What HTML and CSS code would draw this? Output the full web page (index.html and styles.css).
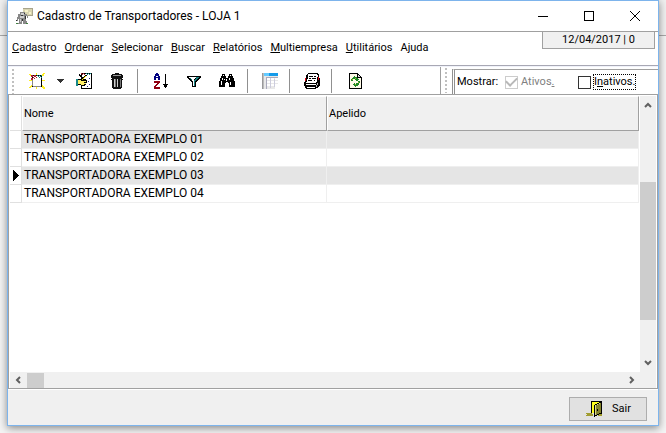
FILE: index.html
```html
<!DOCTYPE html>
<html lang="pt-BR">
<head>
<meta charset="utf-8">
<title>Cadastro de Transportadores - LOJA 1</title>
<link rel="stylesheet" href="styles.css">
</head>
<body>
<main class="window">
  <header class="titlebar">
    <svg class="app-icon" viewBox="0 0 18 18" shape-rendering="crispEdges">
      <path fill="#d8d4b0" d="M8 1h9v7H9z"/><path fill="#a8a48c" d="M8 1h10v1H8zM17 1h1v8h-1zM12 8h6v1h-6z"/><path fill="#f6f2c8" d="M10 3h3v2h-3zM14 5h2v2h-2z"/>
      <path fill="#888" d="M5 5h5v2h2v2h1v2h-1V9h-1v5h1v3H8v-4H7v4H3v-1h1v-4H3v2H1v-1h1v-3h1V7h2z"/><path fill="#ccc" d="M6 6h3v2H6zM5 9h4v2H5zM5 12h1v3H5z"/><path fill="#333" d="M9 6h1v1H9zM1 13h1v1H1zM7 12h1v2H7zM10 9h1v3h-1zM6 8h2v1H6z"/><path fill="#408040" d="M1 16h2v1H1zM11 16h2v1h-2z"/>
    </svg>
    <h1>Cadastro de Transportadores - LOJA 1</h1>
    <div class="caption-buttons">
      <button type="button" aria-label="Minimizar"><svg viewBox="0 0 10 10" shape-rendering="crispEdges"><path fill="#000" d="M0 5h10v1H0z"/></svg></button>
      <button type="button" aria-label="Maximizar"><svg viewBox="0 0 10 10" shape-rendering="crispEdges"><path fill="#000" fill-rule="evenodd" d="M0 0h10v10H0zM1 1v8h8V1z"/></svg></button>
      <button type="button" aria-label="Fechar"><svg viewBox="0 0 10 10"><path stroke="#000" d="M0 0l10 10M10 0L0 10"/></svg></button>
    </div>
  </header>

  <div class="menu-row">
    <nav class="menu">
      <a href="#"><u>C</u>adastro</a>
      <a href="#"><u>O</u>rdenar</a>
      <a href="#"><u>S</u>elecionar</a>
      <a href="#"><u>B</u>uscar</a>
      <a href="#"><u>R</u>elatórios</a>
      <a href="#"><u>M</u>ultiempresa</a>
      <a href="#"><u>U</u>tilitários</a>
      <a href="#">Ajuda</a>
    </nav>
    <div class="status-date">12/04/2017 | 0</div>
  </div>

  <div class="toolbar">
    <div class="tools">
      <span class="grip"></span>
      <button type="button" aria-label="Novo"><svg viewBox="0 0 16 16" shape-rendering="crispEdges">
        <path fill="#ffee20" d="M0 1h2v1h1v2H2V3H1V2H0zM7 0h1v3H7zM14 0h2v1h-1v2h-2V1h1zM0 7h3v1H0zM13 7h3v1h-3zM0 14h1v-1h1v-1h2v2H2v1H0zM7 13h1v3H7zM12 12h2v1h1v1h1v2h-2v-1h-1v-1h-1z"/>
        <path fill="#000" d="M3 2h10v12H3z"/><path fill="#fff" d="M4 3h8v10H4z"/><path fill="#888" d="M3 7h1v6H3zM4 13h8v1H4z"/>
        <path fill="#b02030" d="M2 2h2v2H2zM5 2h2v2H5zM4 4h1v1H4zM2 5h2v2H2zM5 5h1v1H5zM7 4h1v1H7z"/><path fill="#188888" d="M8 2h1v1H8zM10 2h1v1h-1zM12 2h1v1h-1zM9 3h1v1H9zM11 3h1v1h-1zM10 4h1v1h-1zM12 4h1v1h-1z"/>
      </svg></button>
      <button type="button" class="drop" aria-label="Opções de novo"><svg viewBox="0 0 7 4" shape-rendering="crispEdges"><path fill="#333" d="M0 0h7v1H6v1H5v1H4v1H3V3H2V2H1V1H0z"/></svg></button>
      <button type="button" aria-label="Editar"><svg viewBox="0 0 16 16" shape-rendering="crispEdges">
        <path fill="#000" d="M5 0h11v16H5z"/><path fill="#fff" d="M6 1h9v14H6z"/><path fill="#b02030" d="M5 0h1v1H5zM7 0h1v1H7zM6 1h1v1H6zM8 1h1v1H8z"/><path fill="#188888" d="M10 0h1v1h-1zM12 0h1v1h-1zM14 0h1v1h-1zM11 1h1v1h-1zM13 1h1v1h-1z"/><path fill="#20207a" d="M13 5h1v1h-1zM12 8h1v1h-1zM13 11h1v1h-1zM11 13h1v1h-1z"/>
        <path fill="#000" d="M3 6h3V5h1V4h1V3h1V2h2v1h-1v1H9v1H8v1h2v1h1v3h-1v2H9v1H5v-1H2V6z"/><path fill="#ffef66" d="M2 7h3v1h5v1H8v1h2v1H8v1H5v-1H2z"/><path fill="#ffe000" d="M9 3h1v1H9zM8 4h1v1H8zM7 5h1v1H7zM6 6h1v1H6z"/><path fill="#188888" d="M0 6h2v7H0z"/><path fill="#000" d="M3 1h1v1h1v1h1v1h1v1H5V4H4V3H3z"/>
      </svg></button>
      <button type="button" aria-label="Excluir"><svg viewBox="0 0 16 16" shape-rendering="crispEdges">
        <path fill="#111" d="M6 0h4v1h3v1h1v3h-1v1h1v1h-1v8h-1v1H4v-1H3V7H2V6h1V5H2V2h1V1h3z"/><path fill="#999" d="M4 2h8v1H4z"/><path fill="#ccc" d="M5 6h1v8H5zM8 6h1v8H8z"/><path fill="#777" d="M6 6h1v8H6zM11 6h1v8h-1z"/>
      </svg></button>
      <span class="sep"></span>
      <button type="button" aria-label="Ordenar"><svg viewBox="0 0 16 16" shape-rendering="crispEdges">
        <path fill="#000080" d="M3 0h2v1h1v2h1v4H5V5H3v2H1V3h1V1h1zM3 3v1h2V3z"/><path fill="#900010" d="M1 8h6v2H6v1H5v1H4v1H3v1h4v2H1v-3h1v-1h1v-1h1v-1H1z"/><path fill="#000" d="M12 1h1v10h2v1h-1v2h-1v1h-1v-1h-1v-2h-1v-1h2z"/>
      </svg></button>
      <button type="button" aria-label="Filtrar"><svg viewBox="0 0 16 16" shape-rendering="crispEdges">
        <path fill="#000" d="M1 3h14v2h-1v1h-1v1h-1v1h-1v1h-1v5H6V9H5V8H4V7H3V6H2V5H1z"/><path fill="#fff" d="M3 4h7v1H9v1H8v1h1v6H7V8H6V7H5V6H4V5H3z"/><path fill="#188080" d="M10 4h3v1h-1v1h-1v1h-1v1H9v5H8V7h1V6h1zM4 5h1v1H4zM5 6h1v1H5z"/>
      </svg></button>
      <button type="button" aria-label="Localizar"><svg viewBox="0 0 16 16" shape-rendering="crispEdges">
        <path fill="#000" d="M3 1h3v2h1v2h2V3h1V1h3v2h1v2h1v3h1v6h-6v-4H9V9H7v1H6v4H0V8h1V5h1V3h1z"/><path fill="#fff" d="M4 2h1v1H4zM3 5h1v2H3zM2 8h1v4H2zM11 2h1v1h-1zM10 5h1v2h-1zM11 9h1v3h-1zM7 6h1v2H7zM5 6h1v1H5z"/>
      </svg></button>
      <span class="sep"></span>
      <button type="button" class="solo" aria-label="Grade"><svg viewBox="0 0 16 16" shape-rendering="crispEdges">
        <path fill="#e8e8e8" d="M0 0h16v16H0z"/><path fill="#999" d="M0 0h1v16H0z"/><path fill="#bbb" d="M1 0h1v16H1z"/><path fill="#159bea" d="M2 0h14v3H2z"/><path fill="#63caff" d="M2 0h5v3H2z"/><path fill="#fff" d="M5 5h3v2H5zM9 5h3v2H9zM13 5h3v2h-3zM5 8h3v2H5zM9 8h3v2H9zM13 8h3v2h-3zM5 11h3v2H5zM9 11h3v2H9zM13 11h3v5h-3z"/><path fill="#aab" d="M4 4h12v1H4zM4 5h1v11H4z"/><path fill="#ccd" d="M8 5h1v10H8zM12 6h1v8h-1z"/>
      </svg></button>
      <span class="sep"></span>
      <button type="button" class="solo" aria-label="Agenda"><svg viewBox="0 0 16 16" shape-rendering="crispEdges">
        <path fill="#000" d="M4 0h10v1h1v4h1v8h-1v1h-1v1h-2v1H2v-1H1v-2H0V9h1V5h1V2h1V1h1z"/><path fill="#fff" d="M4 1h9v1h1v2h-1v5h-1v1H2V9h1V6h1zM2 11h10v1H2zM3 14h8v1H3z"/><path fill="#000" d="M5 3h4v1H5zM10 3h2v1h-2zM5 5h2v1H5zM8 5h4v1H8zM4 7h4v1H4zM10 7h1v1h-1z"/><path fill="#bbb" d="M13 10h1v2h-1zM12 12h1v2h-1z"/><path fill="#e00010" d="M1 5h1v3H1zM14 4h1v3h-1z"/>
      </svg></button>
      <span class="sep"></span>
      <button type="button" aria-label="Atualizar"><svg viewBox="0 0 16 16" shape-rendering="crispEdges">
        <path fill="#000" d="M2 0h9v1h1v1h1v1h1v1h1v12H2z"/><path fill="#fffbe8" d="M3 1h7v4h4v10H3z"/><path fill="#ddd" d="M11 2h1v1h1v1h-2z"/><path fill="#208828" d="M7 3h1v1h2v1h1v1h1v1h-1v1H9V7H8V6H7V6H6v2H4V6h1V5h1V4h1zM11 8h2v2h-1v2h-1v1H9v1H8v-1H7v-1H6v-1h1v-1h1v1h1v-1h2z"/><path fill="#a0c020" d="M5 6h1v1H5zM8 5h1v1H8zM11 9h1v1h-1zM8 11h1v1H8z"/>
      </svg></button>
    </div>
    <form class="filters">
      <span class="grip"></span>
      <div class="filter-box">
        <span class="filter-title">Mostrar:</span>
        <label class="off"><input type="checkbox" checked disabled><span>Ativos<u>.</u></span></label>
        <label><input type="checkbox"><span class="focus">I<u>n</u>ativos.</span></label>
      </div>
    </form>
  </div>

  <section class="grid">
    <div class="sheet">
      <table>
        <colgroup><col class="c-mark"><col class="c-name"><col></colgroup>
        <thead><tr><td></td><th scope="col">Nome</th><th scope="col">Apelido</th></tr></thead>
        <tbody>
          <tr class="odd"><td></td><td>TRANSPORTADORA EXEMPLO 01</td><td></td></tr>
          <tr><td></td><td>TRANSPORTADORA EXEMPLO 02</td><td></td></tr>
          <tr class="odd"><td><svg class="marker" viewBox="0 0 6 11" shape-rendering="crispEdges"><path d="M0 0h1v1h1v1h1v1h1v1h1v1h1v1H5v1H4v1H3v1H2v1H1v1H0z"/></svg></td><td>TRANSPORTADORA EXEMPLO 03</td><td></td></tr>
          <tr><td></td><td>TRANSPORTADORA EXEMPLO 04</td><td></td></tr>
        </tbody>
      </table>
    </div>
    <div class="vscroll">
      <svg viewBox="0 0 8 6"><path d="M1 5l3-3 3 3"/></svg>
      <div class="vtrack"><div class="vthumb"></div></div>
      <svg viewBox="0 0 8 6"><path d="M1 1l3 3 3-3"/></svg>
    </div>
    <div class="hscroll">
      <svg viewBox="0 0 6 8"><path d="M5 1L2 4l3 3"/></svg>
      <div class="hthumb"></div>
      <svg viewBox="0 0 6 8"><path d="M1 1l3 3-3 3"/></svg>
    </div>
    <div class="corner"></div>
  </section>

  <footer class="footer">
    <button type="button" class="exit">
      <svg viewBox="0 0 16 16" shape-rendering="crispEdges">
        <path fill="#a09c30" d="M0 12h6v1H0zM1 13h6v1H1zM0 14h7v1H0zM13 13h3v1h-3zM12 14h4v1h-4z"/><path fill="#000" d="M5 0h11v13h-3v1h-2v1H9v1H8V4H7v8H5z"/><path fill="#ffff20" d="M6 1h7v1h-2v1H9v1H8v8H6z"/><path fill="#85842c" d="M9 4h2V3h2V2h2v10h-2v1h-2v1H9z"/><path fill="#d8d890" d="M9 4h2V3h2V2h1v1h-2v1h-2v10H9z"/><path fill="#000" d="M11 8h1v2h-1z"/>
      </svg>
      <span>Sair</span>
    </button>
  </footer>
</main>
</body>
</html>
```
FILE: styles.css
```css
* { box-sizing: border-box; }

body {
  margin: 0;
  padding: 0 7px 7px;
  min-height: 100vh;
  display: flex;
  background: linear-gradient(#f0f0f0 35px, #a8a8a8 35px, #a8a8a8 36px, #f4f4f4 36px);
  font: 11px/14px Roboto, "Liberation Sans", sans-serif;
  color: #000;
}

button, input { font: inherit; color: inherit; margin: 0; }
button { padding: 0; border: 0; background: none; }

.window {
  flex: 1;
  min-width: 0;
  display: flex;
  flex-direction: column;
  background: #fff;
  border: 1px solid #7db4ec;
  box-shadow: 0 2px 8px rgba(0, 0, 0, 0.45);
}

.titlebar {
  display: flex;
  align-items: center;
  height: 31px;
  padding-left: 7px;
  border-bottom: 1px solid #a0a0a0;
}
.app-icon { width: 18px; height: 18px; margin-right: 4px; }
.titlebar h1 {
  flex: 1;
  margin: 0;
  font: 12px/16px Roboto, "Noto Sans", sans-serif;
}
.caption-buttons { display: flex; }
.caption-buttons button { width: 46px; height: 28px; display: grid; place-items: center; }
.caption-buttons svg { width: 10px; height: 10px; }

.menu-row {
  display: flex;
  justify-content: space-between;
  align-items: flex-start;
  height: 34px;
  border-bottom: 1px solid #a8a8b4;
}
.menu { display: flex; gap: 8px; padding: 9px 4px; }
.menu a { color: inherit; text-decoration: none; white-space: nowrap; }
.status-date {
  width: 113px;
  margin-right: 3px;
  border: 1px solid #a0a0a0;
  border-top: 0;
  background: #f0f0f0;
  line-height: 16px;
  text-align: center;
}

.toolbar {
  display: flex;
  justify-content: space-between;
  height: 28px;
  border-top: 1px solid #f0f2fa;
}
.tools { display: flex; align-items: center; }
.tools button { width: 33px; height: 26px; padding-left: 1px; display: grid; place-items: center; }
.tools button svg { width: 16px; height: 16px; }
.tools .solo { width: 31px; }
.tools .drop { width: 14px; }
.tools .drop svg { width: 7px; height: 4px; }
.grip {
  width: 2px;
  height: 25px;
  margin: 1px 6px 0 4px;
  background: repeating-linear-gradient(#c0c0c0 0 2px, #fff 2px 4px);
}
.sep { width: 1px; height: 24px; margin: 0 6px 0 4px; background: #909090; }

.filters { display: flex; width: 218px; border-left: 1px solid #a0a0a0; }
.filters .grip { margin-right: 5px; }
.filter-box {
  flex: 1;
  display: flex;
  align-items: center;
  margin-top: 2px;
  padding-left: 2px;
  border-top: 1px solid #a0a0a0;
  border-left: 3px double #909090;
}
.filter-title { width: 48px; }
.filters label { display: flex; align-items: center; gap: 3px; width: 73px; }
.filters .off { color: #808080; }
.filters input {
  appearance: none;
  width: 13px;
  height: 13px;
  border: 1px solid #333;
  background: #fff;
}
.filters input:checked {
  border-color: #ccc;
  display: grid;
  place-items: center;
}
.filters input:checked::before {
  content: "";
  width: 9px;
  height: 5px;
  margin-top: -3px;
  border: solid #b8b8b8;
  border-width: 0 0 2px 2px;
  rotate: -45deg;
}
.focus { outline: 1px dotted #000; }

.grid {
  flex: 1;
  display: grid;
  grid-template-columns: 1fr 16px;
  grid-template-rows: 1fr 16px;
  padding: 1px 1px 0 1px;
  border: 1px solid #a0a0a0;
  background: #fff;
}
.sheet { padding-right: 1px; }
table { width: 100%; table-layout: fixed; border-collapse: separate; border-spacing: 0; }
.c-mark { width: 12px; }
.c-name { width: 305px; }
th, td { padding: 0; text-align: left; font-weight: normal; }
thead td { height: 35px; border-right: 1px solid #e0e0e0; border-bottom: 1px solid #e0e0e0; }
thead th {
  padding-left: 1px;
  background: #f0f0f0;
  border: 1px solid #a0a0a0;
  border-top-color: #fff;
  border-left-color: #fff;
}
tbody td { height: 18px; padding-left: 2px; border-right: 1px solid #efefef; border-bottom: 1px solid #efefef; font-size: 12px; line-height: 17px; }
tbody td:first-child { padding-left: 3px; border-color: #e0e0e0; }
tbody .odd td:not(:first-child) { background: #e5e5e5; }
.marker { display: block; width: 6px; height: 11px; }

.vscroll, .hscroll { display: flex; align-items: center; background: #f0f0f0; }
.vscroll svg, .hscroll svg { fill: none; stroke: #606060; stroke-width: 2; }
.vscroll { flex-direction: column; padding: 6px 0; }
.vscroll svg { width: 8px; height: 6px; }
.vtrack { flex: 1; width: 100%; display: flex; flex-direction: column; padding: 74px 0 40px; }
.vthumb { flex: 1; background: #cdcdcd; }
.hscroll { padding: 0 5px; }
.hscroll svg { width: 6px; height: 8px; }
.hthumb { width: 17px; height: 15px; margin: 0 auto 0 6px; background: #cdcdcd; }
.corner { background: #f0f0f0; }

.footer {
  display: flex;
  justify-content: flex-end;
  margin-top: 1px;
  padding: 7px 11px 4px;
  background: #f0f0f0;
}
.exit {
  display: flex;
  align-items: center;
  gap: 10px;
  width: 78px;
  height: 24px;
  padding-left: 16px;
  border: 1px solid #adadad;
  background: #e1e1e1;
}
.exit svg { width: 16px; height: 16px; }
```
